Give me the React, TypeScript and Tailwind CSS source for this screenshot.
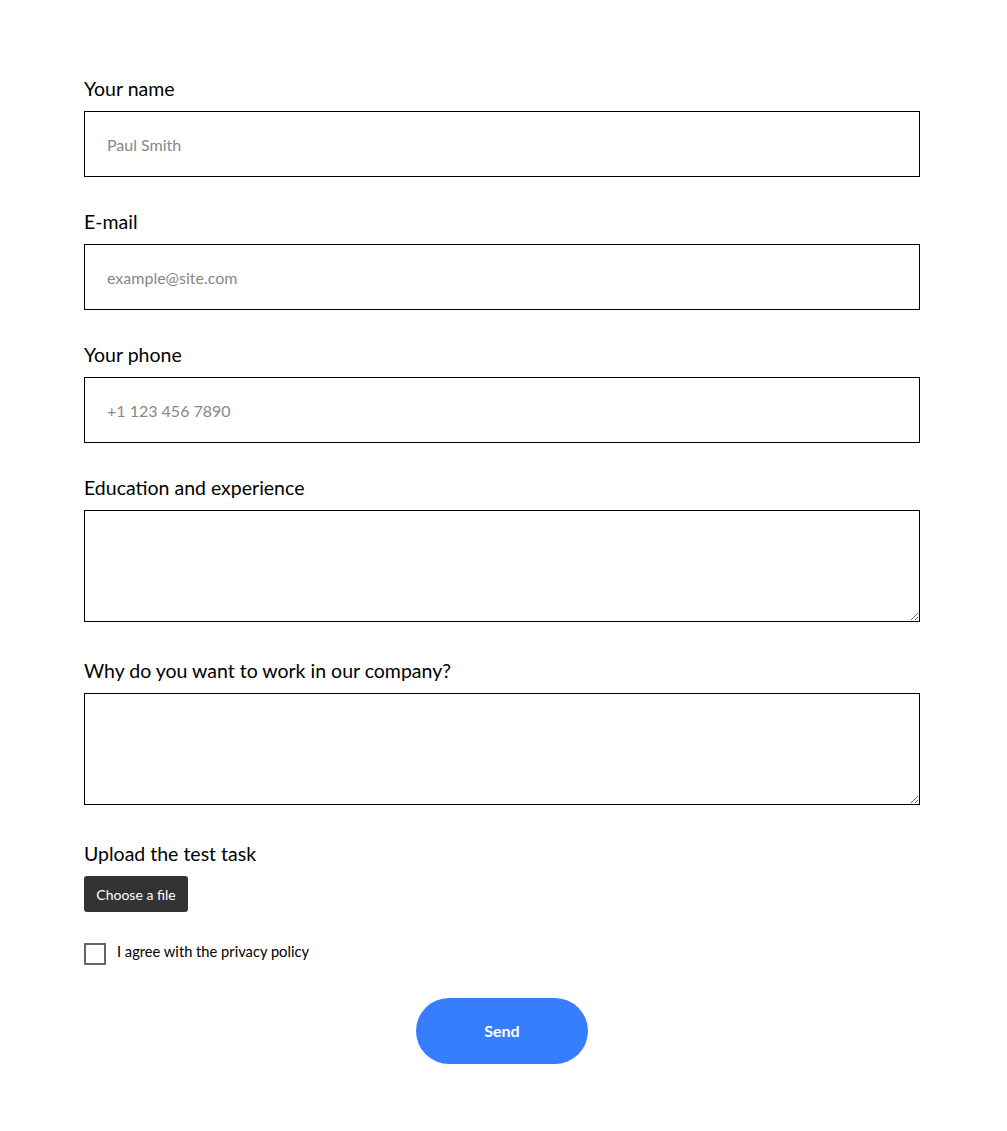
export default function App() {
  const font = { fontFamily: "Lato, 'Liberation Sans', sans-serif" };
  return (
    <div className="min-h-[1131px] bg-white text-black" style={font}>
      <form className="w-[836px] ml-[84px] pt-[77px]" onSubmit={(e) => e.preventDefault()}>
        {/* text inputs */}
        <div className="mb-[33px]">
          <label className="block text-[19.5px] leading-[24px] mb-[10px]">Your name</label>
          <input
            type="text"
            placeholder="Paul Smith"
            className="block w-full h-[66px] border border-black px-[22px] text-[16px] placeholder:text-[#888] outline-none"
          />
        </div>
        <div className="mb-[33px]">
          <label className="block text-[19.5px] leading-[24px] mb-[10px]">E-mail</label>
          <input
            type="text"
            placeholder="example@site.com"
            className="block w-full h-[66px] border border-black px-[22px] text-[16px] placeholder:text-[#888] outline-none"
          />
        </div>
        <div className="mb-[33px]">
          <label className="block text-[19.5px] leading-[24px] mb-[10px]">Your phone</label>
          <input
            type="text"
            placeholder="+1 123 456 7890"
            className="block w-full h-[66px] border border-black px-[22px] text-[16px] placeholder:text-[#888] outline-none"
          />
        </div>

        {/* textareas */}
        <div className="mb-[37px]">
          <label className="block text-[19.5px] leading-[24px] mb-[10px]">Education and experience</label>
          <textarea className="block w-full h-[112px] border border-black px-[22px] py-[14px] text-[16px] outline-none" />
        </div>
        <div className="mb-[37px]">
          <label className="block text-[19.5px] leading-[24px] mb-[10px]">Why do you want to work in our company?</label>
          <textarea className="block w-full h-[112px] border border-black px-[22px] py-[14px] text-[16px] outline-none" />
        </div>

        {/* upload */}
        <div className="mb-[31px]">
          <label className="block text-[19.5px] leading-[24px] mb-[10px]">Upload the test task</label>
          <button
            type="button"
            className="h-[36px] w-[104px] rounded-[3px] bg-[#333] text-white text-[14px]"
          >
            Choose a file
          </button>
        </div>

        <label className="flex items-center gap-[11px] mb-[33px] cursor-pointer">
          <span className="w-[22px] h-[22px] border-2 border-[#666] bg-white" />
          <span className="text-[14.7px] leading-[16px] mb-[6px]">I agree with the privacy policy</span>
        </label>

        <div className="flex justify-center pb-[67px]">
          <button
            type="submit"
            className="w-[172px] h-[66px] rounded-full bg-[#377dff] text-white text-[16px] font-bold"
          >
            Send
          </button>
        </div>
      </form>
    </div>
  );
}
